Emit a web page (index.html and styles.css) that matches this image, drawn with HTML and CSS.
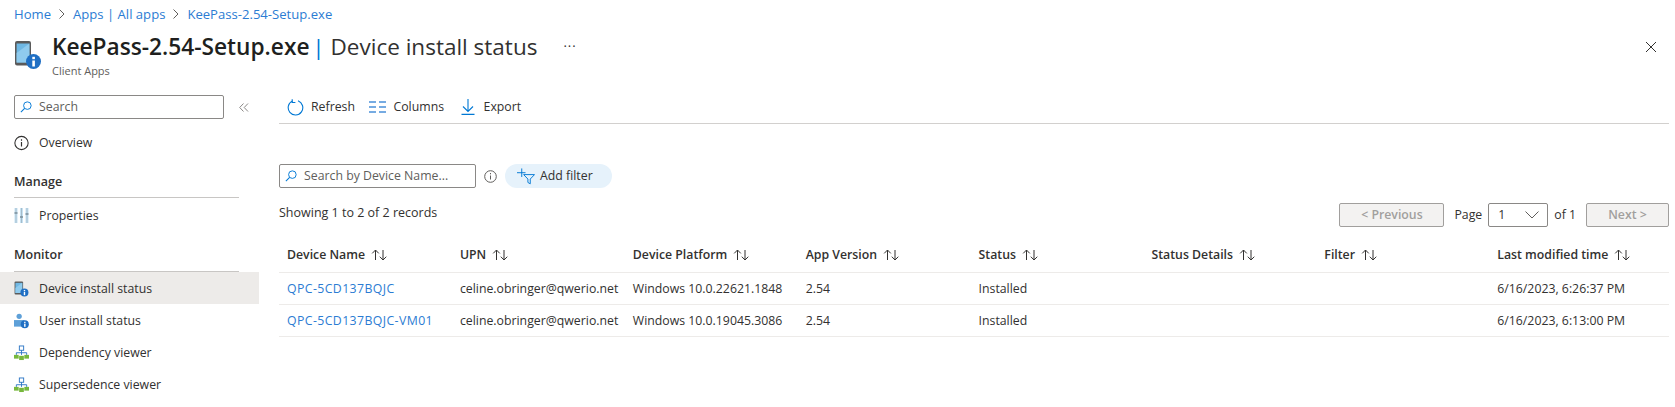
FILE: index.html
```html
<!DOCTYPE html>
<html lang="en">
<head>
<meta charset="utf-8">
<title>KeePass-2.54-Setup.exe | Device install status</title>
<link rel="stylesheet" href="styles.css">
</head>
<body>
<svg class="defs" width="0" height="0" aria-hidden="true">
  <defs>
    <symbol id="i-search" viewBox="0 0 14 14"><circle cx="8.600" cy="5.400" r="4.400" fill="none" stroke="#0078d4" stroke-width="1.100"/><path d="M5.400 8.600 1 13" fill="none" stroke="#0078d4" stroke-width="1.200"/></symbol>
    <symbol id="i-sort" viewBox="0 0 17 12"><path d="M4.500 11V1.200M1.200 4.400 4.500 1l3.300 3.400M12 1v10M8.800 7.700 12 11l3.300-3.300" fill="none" stroke="#323130" stroke-width="1"/></symbol>
    <symbol id="i-device" viewBox="0 0 28 30"><rect x="1" y="1" width="16" height="24.500" rx="2" fill="#5a5a5a"/><rect x="2.600" y="3.500" width="12.800" height="19" fill="#6fb8e4"/><path d="M2.600 22.500V13L15.400 3.500v19z" fill="#8fcbee"/><circle cx="19.500" cy="21.500" r="7.500" fill="#1f6fc4"/><rect x="18.300" y="20.500" width="2.600" height="6" fill="#fff"/><rect x="18.300" y="16.800" width="2.600" height="2.400" fill="#fff"/></symbol>
    <symbol id="i-user" viewBox="0 0 16 16"><circle cx="5.500" cy="3" r="2.800" fill="#5ea0d8"/><path d="M0 7h11v7H0z" fill="#5ea0d8"/><circle cx="11.500" cy="11.500" r="4.300" fill="#1f6fc4"/><rect x="10.800" y="10.800" width="1.500" height="3.400" fill="#fff"/><rect x="10.800" y="8.800" width="1.500" height="1.300" fill="#fff"/></symbol>
    <symbol id="i-tree" viewBox="0 0 16 16"><rect x="5.700" y="0.500" width="4.600" height="4.600" fill="#fff" stroke="#2f78c6"/><path d="M8 5v5M2.500 10V7.700h11V10" fill="none" stroke="#2f78c6"/><rect x="0" y="10" width="5" height="4" fill="#76b83c"/><rect x="5.500" y="11" width="5" height="4.500" fill="#76b83c"/><rect x="11" y="10" width="5" height="4" fill="#76b83c"/></symbol>
    <symbol id="i-chev" viewBox="0 0 6 10"><path d="M.5.500 5 5 .5 9.500" fill="none" stroke="#605e5c"/></symbol>
  </defs>
</svg>

<nav class="crumbs">
  <a>Home</a><span class="sep"><svg class="chev"><use href="#i-chev"/></svg></span><a>Apps | All apps</a><span class="sep"><svg class="chev"><use href="#i-chev"/></svg></span><a>KeePass-2.54-Setup.exe</a>
</nav>

<header class="head">
  <svg class="head-icon"><use href="#i-device"/></svg>
  <div class="head-text">
    <h1><b>KeePass-2.54-Setup.exe</b> <span class="bar">|</span> Device install status</h1>
    <div class="sub">Client Apps</div>
  </div>
  <span class="dots">···</span>
  <svg class="close" width="12" height="12" viewBox="0 0 12 12"><path d="M1 1l10 10M11 1 1 11" stroke="#323130" stroke-width="1" fill="none"/></svg>
</header>

<div class="body">
  <aside class="side">
    <div class="side-top">
      <div class="box side-search"><svg class="s12"><use href="#i-search"/></svg><span>Search</span></div>
      <svg class="collapse" width="10" height="9" viewBox="0 0 10 9"><path d="M4.500.500.700 4.500l3.800 4M9 .500 5.200 4.500 9 8.500" fill="none" stroke="#8a8886"/></svg>
    </div>
    <div class="item item-first">
      <svg class="ico" viewBox="0 0 14 14"><circle cx="7" cy="7" r="6.200" fill="none" stroke="#323130"/><path d="M7 6v4.200M7 3.500v1.300" stroke="#323130" stroke-width="1.100"/></svg>
      <span>Overview</span>
    </div>
    <div class="group">Manage</div>
    <div class="item after-group">
      <svg class="ico" viewBox="0 0 14 16"><path d="M0 0h3v15H0zM5.500 0h3v15h-3zM11 0h3v15h-3z" fill="#c6e2f3"/><path d="M1.500 0v15M7 0v15M12.500 0v15" stroke="#a5bccb"/><path d="M0 5h3M5.500 9h3M11 6h3" stroke="#7b8e9b" stroke-width="1.500"/></svg>
      <span>Properties</span>
    </div>
    <div class="group group-tall">Monitor</div>
    <div class="item monitor-item active"><svg class="ico"><use href="#i-device"/></svg><span>Device install status</span></div>
    <div class="item monitor-item"><svg class="ico"><use href="#i-user"/></svg><span>User install status</span></div>
    <div class="item monitor-item"><svg class="ico"><use href="#i-tree"/></svg><span>Dependency viewer</span></div>
    <div class="item monitor-item"><svg class="ico"><use href="#i-tree"/></svg><span>Supersedence viewer</span></div>
  </aside>

  <main class="main">
    <div class="toolbar">
      <button class="tool">
        <svg width="17" height="17" viewBox="0 0 17 17"><path d="M5.500 2A7.300 7.300 0 1 0 11 1.800" fill="none" stroke="#0078d4" stroke-width="1.100"/><path d="M5.200.3v3.200h3.200" fill="none" stroke="#0078d4" stroke-width="1.100"/></svg>
        Refresh
      </button>
      <button class="tool">
        <svg width="17" height="12" viewBox="0 0 17 12"><path d="M0 1h7M10 1h7M0 6h7M10 6h7M0 11h7M10 11h7" stroke="#4a90d9" stroke-width="1.300" fill="none"/></svg>
        Columns
      </button>
      <button class="tool">
        <svg width="18" height="16" viewBox="-2.500 0 18 16"><path d="M6.500 0v12M1.500 7.500l5 5 5-5M0 15.400h13" fill="none" stroke="#0078d4" stroke-width="1.100"/></svg>
        Export
      </button>
    </div>

    <div class="filters">
      <div class="box grid-search"><svg class="s12"><use href="#i-search"/></svg><span>Search by Device Name...</span></div>
      <svg class="info" width="13" height="13" viewBox="0 0 13 13"><circle cx="6.500" cy="6.500" r="5.800" fill="none" stroke="#605e5c"/><path d="M6.500 5.500v4M6.500 3v1.300" stroke="#605e5c"/></svg>
      <button class="pill">
        <svg width="18" height="17" viewBox="0 0 19 17"><path d="M5 0v9M0 4.500h9" stroke="#0078d4" fill="none"/><path d="M7 6.500h11.500l-4.500 4.700v5l-2.500-1.400v-3.600z" fill="none" stroke="#0078d4"/></svg>
        Add filter
      </button>
    </div>

    <div class="pager-row">
      <span class="count">Showing 1 to 2 of 2 records</span>
      <div class="pager">
        <button class="pg-btn prev">&lt; Previous</button>
        <span class="pg-label">Page</span>
        <div class="pg-select"><span>1</span><svg width="14" height="8" viewBox="0 0 14 8"><path d="M.5.500 7 7l6.500-6.500" fill="none" stroke="#605e5c"/></svg></div>
        <span class="pg-of">of 1</span>
        <button class="pg-btn next">Next &gt;</button>
      </div>
    </div>

    <div class="table">
      <div class="row th">
        <div>Device Name<svg class="sort"><use href="#i-sort"/></svg></div>
        <div>UPN<svg class="sort"><use href="#i-sort"/></svg></div>
        <div>Device Platform<svg class="sort"><use href="#i-sort"/></svg></div>
        <div>App Version<svg class="sort"><use href="#i-sort"/></svg></div>
        <div>Status<svg class="sort"><use href="#i-sort"/></svg></div>
        <div>Status Details<svg class="sort"><use href="#i-sort"/></svg></div>
        <div>Filter<svg class="sort"><use href="#i-sort"/></svg></div>
        <div>Last modified time<svg class="sort"><use href="#i-sort"/></svg></div>
      </div>
      <div class="row">
        <div><a>QPC-5CD137BQJC</a></div>
        <div>celine.obringer@qwerio.net</div>
        <div>Windows 10.0.22621.1848</div>
        <div>2.54</div>
        <div>Installed</div>
        <div></div>
        <div></div>
        <div>6/16/2023, 6:26:37 PM</div>
      </div>
      <div class="row">
        <div><a>QPC-5CD137BQJC-VM01</a></div>
        <div>celine.obringer@qwerio.net</div>
        <div>Windows 10.0.19045.3086</div>
        <div>2.54</div>
        <div>Installed</div>
        <div></div>
        <div></div>
        <div>6/16/2023, 6:13:00 PM</div>
      </div>
    </div>
  </main>
</div>
</body>
</html>
```
FILE: styles.css
```css
* { box-sizing: border-box; }
html, body { margin: 0; padding: 0; height: 407px; overflow: hidden; background: #fff; }
body { font-family: "Open Sans", "Noto Sans", sans-serif; font-size: 12.300px; color: #323130; line-height: 16px; }
.defs { position: absolute; }
a { color: #2b7cd3; text-decoration: none; }
button { font: inherit; color: inherit; background: none; border: 0; padding: 0; }

.crumbs { height: 26px; padding: 6px 0 0 14px; display: flex; font-size: 13.100px; }
.sep { width: 22px; height: 16px; display: flex; align-items: center; justify-content: center; }
.chev { width: 6px; height: 10px; }

.head { height: 58px; padding: 0 0 0 14px; display: flex; position: relative; }
.head-icon { width: 28px; height: 30px; margin-top: 14px; flex: none; }
.head-text { margin-left: 10px; }
h1 { margin: 6px 0 0; font-size: 22.500px; line-height: 30px; font-weight: 400; color: #323130; white-space: nowrap; }
h1 b { font-weight: 600; color: #201f1e; font-size: 22.700px; }
.bar { color: #0078d4; margin: 0 0 0 -3px; }
.sub { font-size: 11px; line-height: 14px; color: #605e5c; margin-top: 2px; }
.dots { margin: 12px 0 0 26px; color: #323130; font-size: 13px; letter-spacing: 1px; }
.close { position: absolute; right: 18px; top: 15px; }

.body { display: flex; }
.side { width: 259px; flex: none; padding-top: 11px; }
.side-top { display: flex; align-items: center; padding-left: 14px; }
.box { display: flex; align-items: center; border: 1px solid #8a8886; border-radius: 2px; height: 24px; padding-left: 5px; gap: 7px; color: #605e5c; }
.s12 { width: 12px; height: 12px; flex: none; }
.side-search { width: 210px; }
.collapse { margin-left: 15px; }
.item { height: 32px; display: flex; align-items: center; padding-left: 14px; }
.item-first { margin-top: 8px; }
.ico { width: 15px; height: 16px; flex: none; margin-right: 10px; }
.group { height: 33px; margin: 6px 20px 0 14px; padding-top: 9px; border-bottom: 1px solid #c8c6c4; font-weight: 600; font-size: 12.500px; }
.group-tall { height: 34px; }
.after-group { margin-top: 2px; }
.monitor-item { padding-top: 2px; }
.item.active { background: #edebe9; }

.main { flex: 1; min-width: 0; padding: 0 6px 0 20px; }
.toolbar { height: 40px; display: flex; align-items: center; gap: 14.500px; padding: 7px 0 0 8px; border-bottom: 1px solid #d2d0ce; }
.tool { display: flex; align-items: center; gap: 7px; }
.filters { display: flex; align-items: center; margin-top: 40px; height: 24px; }
.grid-search { width: 197px; height: 24px; }
.info { margin-left: 8px; flex: none; }
.pill { margin-left: 8px; width: 107px; height: 24px; border-radius: 12px; background: #e6f2fb; display: flex; align-items: center; padding-left: 12px; gap: 5px; }

.pager-row { display: flex; justify-content: space-between; align-items: flex-start; margin-top: 15px; height: 24px; }
.count { margin-top: 2px; font-size: 12.500px; }
.pager { display: flex; align-items: center; height: 24px; }
.pg-btn { height: 24px; border: 1px solid #a19f9d; border-radius: 2px; background: #f3f2f1; color: #a19f9d; font-weight: 600; }
.prev { width: 105px; }
.next { width: 83px; }
.pg-label { margin-left: 10px; }
.pg-select { width: 60px; height: 24px; margin-left: 6px; border: 1px solid #8a8886; border-radius: 2px; display: flex; align-items: center; justify-content: space-between; padding: 0 8px 0 9px; }
.pg-of { margin: 0 10px 0 6px; }

.table { margin-top: 8px; }
.row { display: grid; grid-template-columns: repeat(7, 172.900px) 1fr; height: 32px; border-bottom: 1px solid #edebe9; align-items: center; padding: 1px 0 0 8px; }
.row a { letter-spacing: .4px; }
.th { height: 38px; padding-top: 2px; font-weight: 600; }
.th > div { display: flex; align-items: center; }
.sort { width: 17px; height: 12px; margin-left: 6px; flex: none; }
```
